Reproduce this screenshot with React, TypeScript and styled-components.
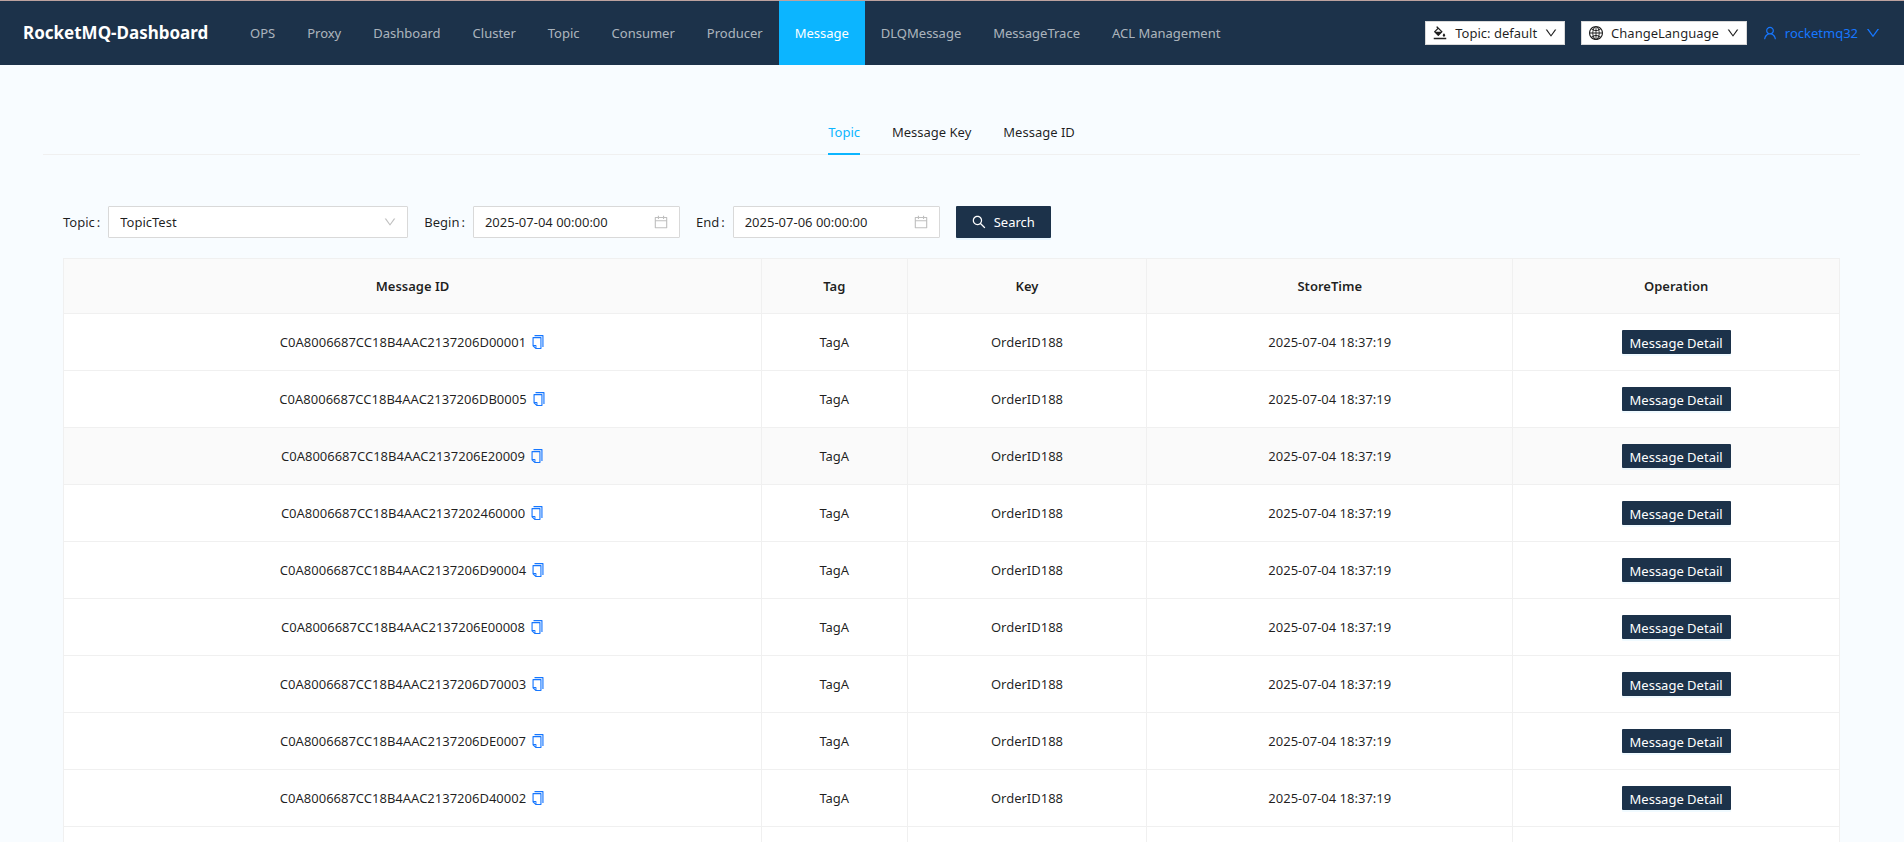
import React, { useState } from 'react';
import styled, { createGlobalStyle } from 'styled-components';
import {
  AiOutlineBgColors,
  AiOutlineCalendar,
  AiOutlineCopy,
  AiOutlineDown,
  AiOutlineGlobal,
  AiOutlineSearch,
  AiOutlineUser,
} from 'react-icons/ai';

const navy = '#1c324a';
const sky = '#0cb5ff';
const blue = '#1677ff';
const ink = 'rgba(0, 0, 0, 0.88)';
const line = '#f0f0f0';

const GlobalStyle = createGlobalStyle`
  *, *::before, *::after { box-sizing: border-box; }
  body {
    margin: 0;
    background: #f8fcff;
    color: ${ink};
    font-family: 'Segoe UI', 'Noto Sans', 'Open Sans', sans-serif;
    font-size: 13px;
    line-height: 22px;
  }
  button, input, select {
    font: inherit;
    color: inherit;
    margin: 0;
  }
  svg { display: block; flex: none; margin: -1px; }
`;

const Header = styled.header`
  display: flex;
  align-items: center;
  height: 65px;
  padding: 0 24px 0 23px;
  border-top: 1px solid #bda29f;
  background: ${navy};
`;

const Brand = styled.div`
  width: 211px;
  flex: none;
  color: #fff;
  font-size: 17px;
  font-weight: 700;
`;

const Nav = styled.nav`
  display: flex;
  flex: 1;
  align-self: stretch;
`;

const NavLink = styled.a<{ $active?: boolean }>`
  display: flex;
  align-items: center;
  padding: 0 16px;
  color: ${(p) => (p.$active ? '#fff' : 'rgba(255, 255, 255, 0.65)')};
  background: ${(p) => (p.$active ? sky : 'transparent')};
  text-decoration: none;
  white-space: nowrap;
`;

const HeaderTools = styled.div`
  display: flex;
  align-items: center;
  gap: 16px;
`;

const SmallButton = styled.button`
  display: flex;
  align-items: center;
  gap: 8px;
  height: 24px;
  padding: 0 7px;
  border: 1px solid #d9d9d9;
  border-radius: 0;
  background: #fff;
  white-space: nowrap;
`;

const UserLink = styled.a`
  display: flex;
  align-items: center;
  gap: 8px;
  color: ${blue};
  text-decoration: none;
`;

const Main = styled.main`
  padding: 44px 44px 0 43px;
`;

const TabList = styled.div`
  display: flex;
  justify-content: center;
  gap: 32px;
  border-bottom: 1px solid ${line};
`;

const Tab = styled.button<{ $active?: boolean }>`
  height: 46px;
  margin-bottom: -1px;
  padding: 2px 0 0;
  border: 0;
  border-bottom: 2px solid ${(p) => (p.$active ? sky : 'transparent')};
  background: none;
  color: ${(p) => (p.$active ? sky : ink)};
`;

const Panel = styled.section`
  padding: 51px 20px 0;
`;

const SearchForm = styled.form`
  display: flex;
  gap: 16px;
  margin-bottom: 20px;
`;

const Field = styled.div`
  display: flex;
  align-items: center;
`;

const Label = styled.label`
  &::after {
    content: ':';
    margin: 0 8px 0 2px;
  }
`;

const Box = styled.div<{ $width: number }>`
  position: relative;
  display: flex;
  align-items: center;
  width: ${(p) => p.$width}px;
  height: 32px;
  border: 1px solid #d9d9d9;
  border-radius: 1px;
  background: #fff;
  color: ${ink};

  > svg {
    position: absolute;
    right: 11px;
    color: rgba(0, 0, 0, 0.25);
    pointer-events: none;
  }
`;

const Select = styled.select`
  width: 100%;
  height: 30px;
  padding: 0 11px;
  border: 0;
  background: none;
  appearance: none;
`;

const DateInput = styled.input`
  width: 100%;
  height: 30px;
  padding: 0 30px 0 11px;
  border: 0;
  background: none;
`;

const SearchButton = styled.button`
  display: flex;
  align-items: center;
  gap: 8px;
  height: 32px;
  padding: 0 16px;
  border: 0;
  border-radius: 1px;
  background: ${navy};
  color: #fff;
  box-shadow: 0 2px 0 rgba(5, 175, 255, 0.06);
`;

const Table = styled.table`
  width: 100%;
  table-layout: fixed;
  border-collapse: separate;
  border-spacing: 0;
  border-top: 1px solid ${line};
  border-left: 1px solid ${line};
  background: #fff;
`;

const Th = styled.th<{ $share: number }>`
  width: ${(p) => p.$share}%;
  height: 55px;
  padding: 0 16px;
  border-right: 1px solid ${line};
  border-bottom: 1px solid ${line};
  background: #fafafa;
  font-weight: 600;
`;

const Td = styled.td`
  height: 57px;
  padding: 0 16px;
  border-right: 1px solid ${line};
  border-bottom: 1px solid ${line};
  text-align: center;
`;

const Row = styled.tr<{ $hovered: boolean }>`
  background: ${(p) => (p.$hovered ? '#fafafa' : '#fff')};
`;

const IdCell = styled.div`
  display: flex;
  align-items: center;
  justify-content: center;
  gap: 5px;
`;

const CopyButton = styled.button`
  padding: 0;
  border: 0;
  background: none;
  color: ${blue};
`;

const DetailButton = styled.button`
  height: 24px;
  padding: 1px 8px 0;
  border: 0;
  border-radius: 1px;
  background: ${navy};
  color: #fff;
  box-shadow: 0 2px 0 rgba(5, 175, 255, 0.06);
`;

const navItems = [
  'OPS', 'Proxy', 'Dashboard', 'Cluster', 'Topic', 'Consumer', 'Producer',
  'Message', 'DLQMessage', 'MessageTrace', 'ACL Management',
];

const tabs = ['Topic', 'Message Key', 'Message ID'];

const columns = [
  { title: 'Message ID', share: 39.3 },
  { title: 'Tag', share: 8.2 },
  { title: 'Key', share: 13.5 },
  { title: 'StoreTime', share: 20.6 },
  { title: 'Operation', share: 18.4 },
];

const messageIds = [
  'C0A8006687CC18B4AAC2137206D00001',
  'C0A8006687CC18B4AAC2137206DB0005',
  'C0A8006687CC18B4AAC2137206E20009',
  'C0A8006687CC18B4AAC2137202460000',
  'C0A8006687CC18B4AAC2137206D90004',
  'C0A8006687CC18B4AAC2137206E00008',
  'C0A8006687CC18B4AAC2137206D70003',
  'C0A8006687CC18B4AAC2137206DE0007',
  'C0A8006687CC18B4AAC2137206D40002',
  'C0A8006687CC18B4AAC2137206DD0006',
];

export default function App() {
  const [tab, setTab] = useState('Topic');
  const [hovered, setHovered] = useState(2);

  return (
    <>
      <GlobalStyle />
      <Header>
        <Brand>RocketMQ-Dashboard</Brand>
        <Nav>
          {navItems.map((item) => (
            <NavLink key={item} href="#" $active={item === 'Message'}>{item}</NavLink>
          ))}
        </Nav>
        <HeaderTools>
          <SmallButton type="button">
            <AiOutlineBgColors size={16} />
            Topic: default
            <AiOutlineDown size={14} />
          </SmallButton>
          <SmallButton type="button">
            <AiOutlineGlobal size={16} />
            ChangeLanguage
            <AiOutlineDown size={14} />
          </SmallButton>
          <UserLink href="#">
            <AiOutlineUser size={16} />
            rocketmq32
            <AiOutlineDown size={16} />
          </UserLink>
        </HeaderTools>
      </Header>
      <Main>
        <TabList role="tablist">
          {tabs.map((name) => (
            <Tab
              key={name}
              type="button"
              role="tab"
              aria-selected={tab === name}
              $active={tab === name}
              onClick={() => setTab(name)}
            >
              {name}
            </Tab>
          ))}
        </TabList>
        <Panel>
          <SearchForm onSubmit={(e) => e.preventDefault()}>
            <Field>
              <Label htmlFor="topic">Topic</Label>
              <Box $width={300}>
                <Select id="topic" defaultValue="TopicTest">
                  <option>TopicTest</option>
                </Select>
                <AiOutlineDown size={14} />
              </Box>
            </Field>
            <Field>
              <Label htmlFor="begin">Begin</Label>
              <Box $width={207}>
                <DateInput id="begin" defaultValue="2025-07-04 00:00:00" />
                <AiOutlineCalendar size={16} />
              </Box>
            </Field>
            <Field>
              <Label htmlFor="end">End</Label>
              <Box $width={207}>
                <DateInput id="end" defaultValue="2025-07-06 00:00:00" />
                <AiOutlineCalendar size={16} />
              </Box>
            </Field>
            <SearchButton type="submit">
              <AiOutlineSearch size={16} />
              Search
            </SearchButton>
          </SearchForm>
          <Table>
            <thead>
              <tr>
                {columns.map((c) => (
                  <Th key={c.title} scope="col" $share={c.share}>{c.title}</Th>
                ))}
              </tr>
            </thead>
            <tbody>
              {messageIds.map((id, i) => (
                <Row key={id} $hovered={hovered === i} onMouseEnter={() => setHovered(i)}>
                  <Td>
                    <IdCell>
                      {id}
                      <CopyButton type="button" aria-label="Copy">
                        <AiOutlineCopy size={16} />
                      </CopyButton>
                    </IdCell>
                  </Td>
                  <Td>TagA</Td>
                  <Td>OrderID188</Td>
                  <Td>2025-07-04 18:37:19</Td>
                  <Td>
                    <DetailButton type="button">Message Detail</DetailButton>
                  </Td>
                </Row>
              ))}
            </tbody>
          </Table>
        </Panel>
      </Main>
    </>
  );
}
